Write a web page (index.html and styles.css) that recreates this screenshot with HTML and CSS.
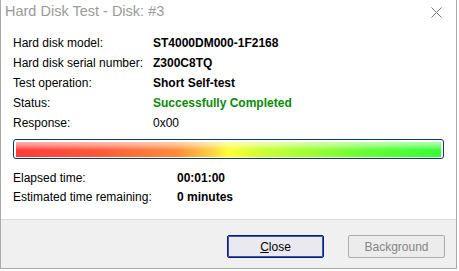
FILE: index.html
```html
<!DOCTYPE html>
<html>
<head>
<meta charset="utf-8">
<link rel="stylesheet" href="styles.css">
</head>
<body>
<div class="window">
  <div class="titlebar">
    <span class="title">Hard Disk Test - Disk: #3</span>
    <svg class="close-x" width="11" height="11" viewBox="0 0 11 11"><path d="M0.5 0.5 L10.5 10.5 M10.5 0.5 L0.5 10.5" stroke="#767676" stroke-width="1" fill="none"/></svg>
  </div>
  <div class="content">
    <div class="info">
      <span class="label">Hard disk model:</span><span class="value bold">ST4000DM000-1F2168</span>
      <span class="label">Hard disk serial number:</span><span class="value bold">Z300C8TQ</span>
      <span class="label">Test operation:</span><span class="value bold">Short Self-test</span>
      <span class="label">Status:</span><span class="value bold ok">Successfully Completed</span>
      <span class="label">Response:</span><span class="value">0x00</span>
    </div>
    <div class="progress"><div class="fill"></div></div>
    <div class="times">
      <span class="label">Elapsed time:</span><span class="value bold">00:01:00</span>
      <span class="label">Estimated time remaining:</span><span class="value bold">0 minutes</span>
    </div>
  </div>
  <div class="footer">
    <button class="btn default"><u>C</u>lose</button>
    <button class="btn disabled">Background</button>
  </div>
</div>
</body>
</html>
```
FILE: styles.css
```css
html, body {
  margin: 0;
  padding: 0;
  background: #ffffff;
}
body {
  font-family: "Liberation Sans", Arial, sans-serif;
  font-size: 12px;
  color: #000;
}
.window {
  width: 455px;
  height: 268px;
  border-left: 1px solid #aaaaaa;
  border-right: 1px solid #aaaaaa;
  border-bottom: 1px solid #aaaaaa;
  background: #fff;
  display: flex;
  flex-direction: column;
}
.titlebar {
  height: 33px;
  display: flex;
  align-items: flex-start;
  justify-content: space-between;
  padding-left: 4px;
  padding-right: 14px;
}
.title {
  font-size: 14.5px;
  color: #9a9a9a;
  line-height: 22px;
}
.close-x {
  margin-top: 7px;
}
.content {
  padding: 0 12px;
  display: flex;
  flex-direction: column;
}
.info {
  display: grid;
  grid-template-columns: 140px 1fr;
  line-height: 20px;
}
.times {
  display: grid;
  grid-template-columns: 164px 1fr;
  line-height: 19px;
  margin-top: 10px;
}
.bold { font-weight: bold; }
.ok { color: #0a8a0a; }
.progress {
  margin-top: 6px;
  height: 20px;
  width: 431px;
  box-sizing: border-box;
  border: 1px solid #0d3a66;
  border-radius: 3px;
  padding: 2px 2px 1px 2px;
  background: #fff;
  display: flex;
}
.fill {
  flex: 1;
  background:
    linear-gradient(to bottom, rgba(255,255,255,0.6) 0%, rgba(255,255,255,0.4) 25%, rgba(255,255,255,0) 55%, rgba(255,255,255,0) 100%),
    linear-gradient(to right, #ff3a3a 0%, #ff5a3a 20%, #ff8c3a 38%, #ffd040 46%, #ffff33 50%, #ccff33 58%, #99ff33 70%, #66ff33 82%, #33ff33 100%);
}
.footer {
  margin-top: auto;
  height: 49px;
  border-top: 1px solid #dcdcdc;
  background: #f0f0f0;
  display: flex;
  justify-content: flex-end;
  align-items: flex-start;
  gap: 24px;
  padding: 15px 11px 0 0;
  box-sizing: border-box;
}
.btn {
  width: 97px;
  height: 23px;
  font-family: "Liberation Sans", Arial, sans-serif;
  font-size: 12px;
  border-radius: 2px;
  padding: 0;
  margin: 0;
  box-sizing: border-box;
}
.default {
  border: 1px solid #0a1a7a;
  box-shadow: inset 0 0 0 1px #3c5aa8;
  background: #e9e9ef;
  color: #000;
}
.disabled {
  border: 1px solid #adadad;
  background: #ececec;
  color: #858585;
}
```
